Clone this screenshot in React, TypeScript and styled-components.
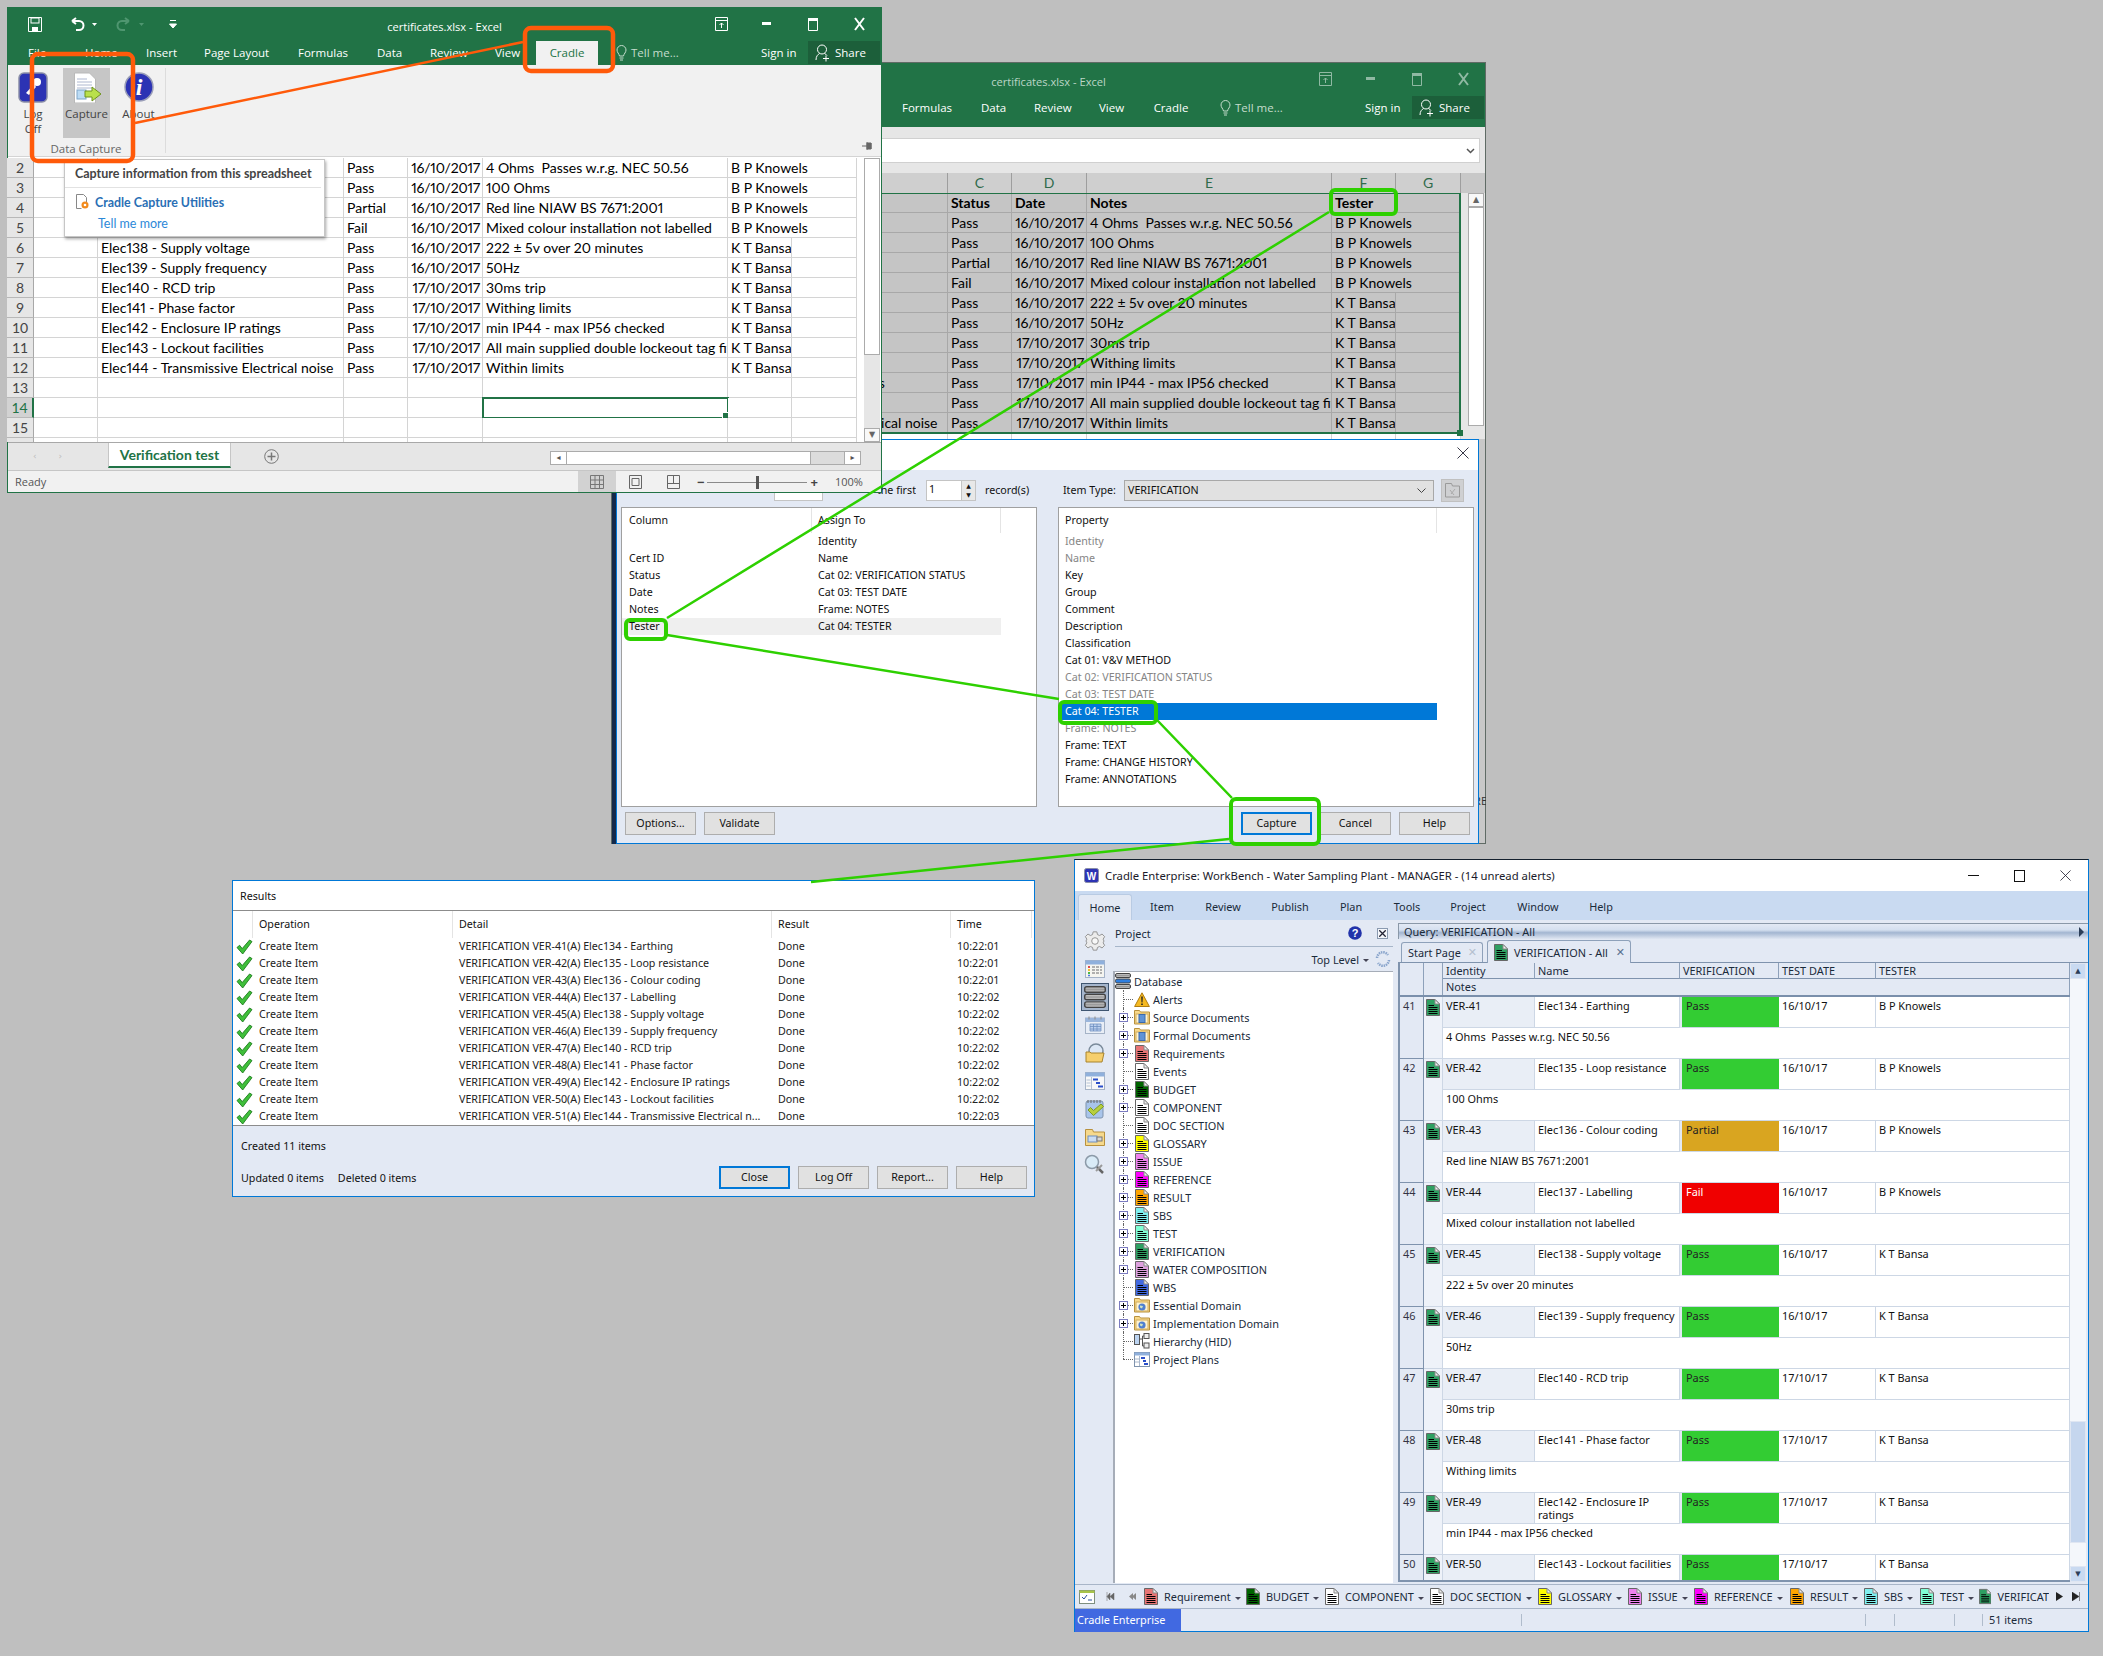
import React from "react";
import styled, { createGlobalStyle } from "styled-components";

const CALIBRI = `Lato, "Liberation Sans", sans-serif`;
const SEGOE = `"Open Sans", "Liberation Sans", sans-serif`;
const TAHOMA = `"Noto Sans", "Liberation Sans", sans-serif`;

const GlobalStyle = createGlobalStyle`
  html, body { margin: 0; padding: 0; background: #bfbfbf; }
  * { box-sizing: border-box; }
`;

const Desktop = styled.div`
  position: relative;
  width: 2103px;
  height: 1656px;
  background: #bfbfbf;
  overflow: hidden;
`;

/* ---------- data ---------- */

const SHEET = [
  { n: 2, name: "Elec134 - Earthing", status: "Pass", date: "16/10/2017", notes: "4 Ohms  Passes w.r.g. NEC 50.56", tester: "B P Knowels" },
  { n: 3, name: "Elec135 - Loop resistance", status: "Pass", date: "16/10/2017", notes: "100 Ohms", tester: "B P Knowels" },
  { n: 4, name: "Elec136 - Colour coding", status: "Partial", date: "16/10/2017", notes: "Red line NIAW BS 7671:2001", tester: "B P Knowels" },
  { n: 5, name: "Elec137 - Labelling", status: "Fail", date: "16/10/2017", notes: "Mixed colour installation not labelled", tester: "B P Knowels" },
  { n: 6, name: "Elec138 - Supply voltage", status: "Pass", date: "16/10/2017", notes: "222 ± 5v over 20 minutes", tester: "K T Bansa" },
  { n: 7, name: "Elec139 - Supply frequency", status: "Pass", date: "16/10/2017", notes: "50Hz", tester: "K T Bansa" },
  { n: 8, name: "Elec140 - RCD trip", status: "Pass", date: "17/10/2017", notes: "30ms trip", tester: "K T Bansa" },
  { n: 9, name: "Elec141 - Phase factor", status: "Pass", date: "17/10/2017", notes: "Withing limits", tester: "K T Bansa" },
  { n: 10, name: "Elec142 - Enclosure IP ratings", status: "Pass", date: "17/10/2017", notes: "min IP44 - max IP56 checked", tester: "K T Bansa" },
  { n: 11, name: "Elec143 - Lockout facilities", status: "Pass", date: "17/10/2017", notes: "All main supplied double lockeout tag fitted", tester: "K T Bansa" },
  { n: 12, name: "Elec144 - Transmissive Electrical noise", status: "Pass", date: "17/10/2017", notes: "Within limits", tester: "K T Bansa" },
];

const RESULT_DETAILS = [
  ["VERIFICATION VER-41(A) Elec134 - Earthing", "10:22:01"],
  ["VERIFICATION VER-42(A) Elec135 - Loop resistance", "10:22:01"],
  ["VERIFICATION VER-43(A) Elec136 - Colour coding", "10:22:01"],
  ["VERIFICATION VER-44(A) Elec137 - Labelling", "10:22:02"],
  ["VERIFICATION VER-45(A) Elec138 - Supply voltage", "10:22:02"],
  ["VERIFICATION VER-46(A) Elec139 - Supply frequency", "10:22:02"],
  ["VERIFICATION VER-47(A) Elec140 - RCD trip", "10:22:02"],
  ["VERIFICATION VER-48(A) Elec141 - Phase factor", "10:22:02"],
  ["VERIFICATION VER-49(A) Elec142 - Enclosure IP ratings", "10:22:02"],
  ["VERIFICATION VER-50(A) Elec143 - Lockout facilities", "10:22:02"],
  ["VERIFICATION VER-51(A) Elec144 - Transmissive Electrical n...", "10:22:03"],
];

const TYPE_COLOURS: Record<string, string> = {
  Requirements: "#e87474",
  Events: "#ffffff",
  BUDGET: "#006400",
  COMPONENT: "#ffffff",
  "DOC SECTION": "#ffffff",
  GLOSSARY: "#ffff00",
  ISSUE: "#ee82ee",
  REFERENCE: "#ff00ff",
  RESULT: "#ffa500",
  SBS: "#7fefef",
  TEST: "#7fffd4",
  VERIFICATION: "#2e9f62",
  "WATER COMPOSITION": "#dda0dd",
  WBS: "#4169e1",
};

/* ---------- drawings ---------- */

const DocIcon = ({ fill }: { fill: string }) => (
  <svg width="14" height="17" viewBox="0 0 14 17">
    <path d="M.5.5H9L13.500 5v11.500H.5z" fill={fill} stroke="#666" />
    <path d="M9 .5V5h4.500z" fill="#eee" stroke="#888" />
    <path d="M2.500 6.500H8M2.500 8.500h9M2.500 10.500h9M2.500 12.500h9M2.500 14.500h9" stroke="#000" />
  </svg>
);

const FolderIcon = ({ globe }: { globe?: boolean }) => (
  <svg width="16" height="15" viewBox="0 0 16 15">
    <path d="M.5 2V.5h5l1 1.500h9v12H.5z" fill="#f8d98a" stroke="#b8913e" />
    <rect x="2" y="4" width="12" height="9" fill="#fff3cf" stroke="#d2ad5d" />
    {globe ? (
      <>
        <circle cx="8" cy="9" r="3.600" fill="#4f7fd0" />
        <path d="M6 7.500l3 .5-1 2.500-2-1z" fill="#cfe3c0" />
      </>
    ) : (
      <rect x="5" y="4.500" width="6" height="8" fill="#5f93d6" stroke="#3a6ab0" />
    )}
  </svg>
);

const DbIcon = ({ size }: { size: number }) => (
  <svg width={size} height={size} viewBox="0 0 16 16">
    <defs>
      <linearGradient id="dbg" x1="0" y1="0" x2="0" y2="1">
        <stop offset="0" stopColor="#dcdcdc" />
        <stop offset=".5" stopColor="#9a9a9a" />
        <stop offset="1" stopColor="#cfcfcf" />
      </linearGradient>
    </defs>
    <rect x=".5" y=".5" width="15" height="4" rx="1.500" fill="url(#dbg)" stroke="#444" />
    <rect x=".5" y="6" width="15" height="4" rx="1.500" fill={size > 16 ? "url(#dbg)" : "#2f7fe0"} stroke="#444" />
    <rect x=".5" y="11.500" width="15" height="4" rx="1.500" fill="url(#dbg)" stroke="#444" />
  </svg>
);

const AlertIcon = () => (
  <svg width="16" height="15" viewBox="0 0 16 15">
    <path d="M8 .8l7.400 13.700H.6z" fill="#f5b921" stroke="#b07d10" />
    <path d="M7.200 4.500h1.600l-.3 6h-1zM7.200 11.500h1.600v1.600H7.200z" fill="#222" />
  </svg>
);

const HierarchyIcon = () => (
  <svg width="16" height="16" viewBox="0 0 16 16">
    <rect x=".5" y="1.500" width="5" height="10" fill="#bcd4f2" stroke="#555" />
    <rect x="10" y=".5" width="5" height="5" fill="#eee" stroke="#555" />
    <rect x="10" y="10" width="5" height="5" fill="#eee" stroke="#555" />
    <path d="M5.500 6h3M8.500 3v10M8.500 3H10M8.500 13H10" fill="none" stroke="#555" />
  </svg>
);

const PlanIcon = () => (
  <svg width="16" height="15" viewBox="0 0 16 15">
    <rect x=".5" y=".5" width="15" height="14" fill="#fff" stroke="#7f93ad" />
    <rect x=".5" y=".5" width="15" height="3" fill="#8fb0dc" />
    <path d="M1 7h4M1 10h4M5.500 4v10" stroke="#aab8cc" />
    <path d="M7 6h4M9 9h3M10 12h4" stroke="#2b4fc9" strokeWidth="2" />
  </svg>
);

const Tick = () => (
  <svg width="17" height="16" viewBox="0 0 17 16">
    <path d="M1 8.500l2.600-2.200 2.600 3.300L13.600 1l2.400 1.600L6.700 15z" fill="#3fbf3a" stroke="#1f7d1f" strokeWidth=".9" />
  </svg>
);

const ExpandBox = () => (
  <svg width="9" height="9" viewBox="0 0 9 9">
    <rect x=".5" y=".5" width="8" height="8" fill="#fff" stroke="#7b7bc0" />
    <path d="M2 4.500h5M4.500 2v5" stroke="#000" />
  </svg>
);

const railIcons: React.ReactNode[] = [
  <svg key="g" width="22" height="22" viewBox="0 0 24 24">
    <path
      d="M10 2h4l.7 3 2.300 1 2.700-1.600 2.800 2.800L20.900 10l.9 2-.9 2 1.600 2.800-2.800 2.800L17 18l-2.300 1-.7 3h-4l-.7-3L7 18l-2.700 1.600-2.800-2.800L3.100 14l-.9-2 .9-2-1.600-2.800 2.800-2.800L7 6l2.300-1z"
      fill="#ececec"
      stroke="#8d8d8d"
    />
    <circle cx="12" cy="12" r="3.600" fill="#f8f8f8" stroke="#8d8d8d" />
  </svg>,
  <svg key="l" width="20" height="18" viewBox="0 0 20 18">
    <rect x=".5" y=".5" width="19" height="17" fill="#f5f5f0" stroke="#a5b3c7" />
    <rect x=".5" y=".5" width="19" height="4" fill="#8fb0dc" />
    <path d="M3 7h2" stroke="#e04a4a" strokeWidth="2" />
    <path d="M3 10h2" stroke="#f0c030" strokeWidth="2" />
    <path d="M3 13h2" stroke="#4ab84a" strokeWidth="2" />
    <path d="M3 15.500h2" stroke="#4a7ae0" strokeWidth="1.500" />
    <path d="M7 7h10M7 10h10M7 13h10" stroke="#999" strokeWidth="1.500" strokeDasharray="3 1" />
  </svg>,
  <DbIcon key="d" size={22} />,
  <svg key="c" width="20" height="18" viewBox="0 0 20 18">
    <rect x=".5" y="2" width="19" height="15.500" fill="#e9eef6" stroke="#a5b3c7" />
    <rect x=".5" y="2" width="19" height="4" fill="#9bb6dc" />
    <path d="M4 .5v3M10 .5v3M16 .5v3" stroke="#8a8a8a" />
    <path d="M5 8h11v7H5z M5 10.500h11M5 13h11M8.500 8v7M12 8v7" fill="#bcd0ee" stroke="#6f8fc0" strokeWidth=".8" />
  </svg>,
  <svg key="o" width="20" height="20" viewBox="0 0 20 20">
    <circle cx="11" cy="8" r="7" fill="#dce7f5" stroke="#7a8a9a" strokeWidth="1.500" />
    <path d="M1 9h4l1 1h13l-2 9H1z" fill="#f6cf6d" stroke="#a8842e" />
  </svg>,
  <svg key="p" width="20" height="18" viewBox="0 0 20 18">
    <rect x=".5" y=".5" width="19" height="17" fill="#f8f8f8" stroke="#a5b3c7" />
    <rect x=".5" y=".5" width="19" height="4" fill="#8fb0dc" />
    <path d="M6.500 5v12" stroke="#b5c3d6" />
    <path d="M1.500 8h4M1.500 11h4M1.500 14h4" stroke="#b5c3d6" />
    <path d="M8 7.500h5M11 11h4M13 14.500h5" stroke="#2b4fc9" strokeWidth="2" />
  </svg>,
  <svg key="k" width="20" height="20" viewBox="0 0 20 20">
    <rect x="1" y="2" width="17" height="17" rx="2" fill="#a8c4ea" stroke="#7f93ad" />
    <path d="M3 1v3M6 1v3M9 1v3M12 1v3M15 1v3" stroke="#666" />
    <path d="M3 11l2.500-2.500 3 3L16 5l2.500 2.500L8.500 16.500z" fill="#b7cf3e" stroke="#7f9a20" />
  </svg>,
  <svg key="f" width="20" height="17" viewBox="0 0 20 17">
    <path d="M.5 3V.5h7l1 2.500h11v13.500H.5z" fill="#f6d98c" stroke="#b8913e" />
    <rect x="3" y="7" width="9" height="6" fill="#c9dcf3" stroke="#6f8fc0" />
    <rect x="12" y="8" width="5" height="4" fill="#d8d8d8" stroke="#777" />
  </svg>,
  <svg key="s" width="22" height="22" viewBox="0 0 22 22">
    <circle cx="8" cy="8" r="6.500" fill="#d9ebf7" stroke="#8c9aa8" strokeWidth="1.500" />
    <path d="M13 13l6 6" stroke="#666" strokeWidth="2.500" />
    <path d="M12 17l6-6" stroke="#9a9a9a" strokeWidth="2" />
  </svg>,
];

/* ---------- excel windows ---------- */

const ExcelFrame = styled.section<{ $front?: boolean }>`
  position: absolute;
  left: ${(p) => (p.$front ? 7 : 611)}px;
  top: ${(p) => (p.$front ? 7 : 62)}px;
  width: 875px;
  height: ${(p) => (p.$front ? 486 : 782)}px;
  display: flex;
  flex-direction: column;
  background: ${(p) => (p.$front ? "#f1f1f1" : "#c8c8c8")};
  outline: 1px solid ${(p) => (p.$front ? "#217346" : "#5f6b65")};
  outline-offset: -1px;
  overflow: hidden;
`;

const ExcelHead = styled.div<{ $tall?: boolean }>`
  height: ${(p) => (p.$tall ? 65 : 58)}px;
  flex: none;
  background: #217346;
  color: #fff;
`;

const TitleRow = styled.div`
  height: 34px;
  display: grid;
  grid-template-columns: 1fr auto 1fr;
  align-items: center;
`;

const QuickAccess = styled.div`
  display: flex;
  align-items: center;
  padding-left: 21px;
`;

const QuickSlot = styled.span<{ $w: number }>`
  display: flex;
  width: ${(p) => p.$w}px;
  align-items: center;
`;

const WindowTitle = styled.div<{ $dim?: boolean }>`
  font: 11.1px ${SEGOE};
  color: ${(p) => (p.$dim ? "#bcd6c6" : "#fff")};
  padding-top: 4px;
`;

const CaptionButtons = styled.div<{ $dim?: boolean }>`
  display: flex;
  justify-content: flex-end;
  opacity: ${(p) => (p.$dim ? 0.5 : 1)};
`;

const CaptionButton = styled.span`
  display: flex;
  width: 46px;
  justify-content: center;
  align-items: center;
`;

const TabRow = styled.div`
  height: 24px;
  display: flex;
  padding-left: 21px;
  font: 11.5px/24px ${SEGOE};
`;

const RibbonTab = styled.span<{ $w: number; $on?: boolean; $center?: boolean }>`
  width: ${(p) => p.$w}px;
  flex: none;
  white-space: nowrap;
  ${(p) => p.$center && "text-align:center;"}
  ${(p) => p.$on && "background:#f1f1f1;color:#217346;"}
`;

const TellMe = styled.span`
  display: flex;
  align-items: center;
  gap: 4px;
  width: 163px;
  padding-left: 18px;
  color: #c5ddcd;
`;

const SignIn = styled.span`
  width: 47px;
  flex: none;
`;

const ShareTab = styled.span`
  display: flex;
  align-items: center;
  gap: 5px;
  width: 72px;
  height: 23px;
  padding-left: 7px;
  background: #1c5f3a;
`;

const Ribbon = styled.div`
  height: 92px;
  flex: none;
  display: flex;
  padding-top: 3px;
  background: #f1f1f1;
  border-bottom: 1px solid #d4d4d4;
`;

const RibbonGroup = styled.div`
  width: 159px;
  margin-bottom: 3px;
  padding-left: 8px;
  border-right: 1px solid #dcdcdc;
  display: grid;
  grid-template-columns: 48px 49px 53px;
  grid-template-rows: 70px 1fr;
`;

const RibbonCommand = styled.div<{ $w: number; $on?: boolean }>`
  width: ${(p) => p.$w}px;
  display: flex;
  flex-direction: column;
  align-items: center;
  padding-top: 4px;
  font: 11.5px/15px ${SEGOE};
  color: #444;
  text-align: center;
  background: ${(p) => (p.$on ? "#c6c6c6" : "transparent")};
`;

const RibbonCommandIcon = styled.span`
  display: block;
  height: 31px;
  margin-bottom: 3px;
`;

const RibbonGroupName = styled.div`
  grid-column: 1 / 4;
  padding-right: 8px;
  font: 11.5px/22px ${SEGOE};
  color: #666;
  text-align: center;
`;

const RibbonPin = styled.span`
  margin: auto 9px 5px auto;
  line-height: 0;
`;

const FormulaBar = styled.div`
  height: 46px;
  flex: none;
  padding: 11px 6px 10px 0;
  background: #e6e6e6;
`;

const FormulaInput = styled.div`
  height: 25px;
  display: flex;
  justify-content: flex-end;
  align-items: center;
  padding-right: 4px;
  background: #fff;
  border: 1px solid #d0d0d0;
`;

const SheetArea = styled.div<{ $front?: boolean }>`
  display: flex;
  flex: none;
  height: ${(p) => (p.$front ? 286 : 246)}px;
  padding-top: ${(p) => (p.$front ? 1 : 0)}px;
  background: ${(p) => (p.$front ? "#fff" : "#e6e6e6")};
  border-bottom: ${(p) => (p.$front ? "1px solid #a8a8a8" : "0")};
  overflow: hidden;
`;

const SheetGrid = styled.div`
  position: relative;
  flex: none;
  width: 850px;
`;

const SheetRow = styled.div`
  display: grid;
  grid-template-columns: 27px 64px 246px 64px 75px 245px 64px 65px;
  height: 20px;
`;

const RowHead = styled.div<{ $active?: boolean; $dim?: boolean }>`
  font: 14px/19px ${CALIBRI};
  text-align: center;
  color: ${(p) => (p.$active ? "#217346" : "#444")};
  background: ${(p) => (p.$active ? "#d2d2d2" : p.$dim ? "#c8c8c8" : "#e6e6e6")};
  border-right: ${(p) => (p.$active ? "2px solid #217346" : "1px solid #a8a8a8")};
  border-bottom: 1px solid #b8b8b8;
`;

const ColumnHead = styled(RowHead)`
  color: #2f6a4b;
  background: #cfcfcf;
  border-right: 1px solid #9e9e9e;
  border-bottom: 0;
`;

const Cell = styled.div<{
  $dim?: boolean;
  $wide?: boolean;
  $date?: boolean;
  $bold?: boolean;
  $active?: boolean;
}>`
  position: relative;
  padding: 0 ${(p) => (p.$date ? 2 : 3)}px 0 3px;
  font: ${(p) => (p.$bold ? 700 : 400)} 14px/19px ${CALIBRI};
  font-variant-numeric: proportional-nums;
  letter-spacing: ${(p) => (p.$date ? "-0.2px" : "0")};
  color: #000;
  white-space: pre;
  overflow: ${(p) => (p.$active ? "visible" : "hidden")};
  text-align: ${(p) => (p.$date ? "right" : "left")};
  background: ${(p) => (p.$dim ? "#c5c5c5" : "#fff")};
  border-right: 1px solid ${(p) => (p.$dim ? "#a8a8a8" : "#d4d4d4")};
  border-bottom: 1px solid ${(p) => (p.$dim ? "#a8a8a8" : "#d4d4d4")};
  ${(p) => p.$wide && "grid-column: span 2;"}
  ${(p) =>
    p.$active &&
    `outline:2px solid #217346;outline-offset:-1px;
     &::after{content:"";position:absolute;right:-3px;bottom:-3px;width:6px;height:6px;background:#217346;border:1px solid #fff;}`}
`;

const SelectionBox = styled.div`
  position: absolute;
  left: 26px;
  top: -1px;
  width: 824px;
  height: 242px;
  border: 2px solid #217346;
  pointer-events: none;
  &::after {
    content: "";
    position: absolute;
    right: -4px;
    bottom: -4px;
    width: 6px;
    height: 6px;
    background: #217346;
  }
`;

const ScrollColumn = styled.div`
  width: 16px;
  margin-left: 7px;
  flex: none;
  display: flex;
  flex-direction: column;
  background: #e6e6e6;
`;

const ScrollButton = styled.span`
  flex: none;
  height: 14px;
  display: flex;
  align-items: center;
  justify-content: center;
  background: #f8f8f8;
  border: 1px solid #ababab;
  font: 8px/1 "DejaVu Sans", sans-serif;
  color: #666;
`;

const ScrollThumb = styled.span<{ $h: number }>`
  flex: none;
  height: ${(p) => p.$h}px;
  background: #fff;
  border: 1px solid #ababab;
`;

const ScrollRest = styled.span`
  flex: 1;
`;

const SheetTabs = styled.div`
  height: 28px;
  flex: none;
  display: flex;
  align-items: flex-start;
  background: #e6e6e6;
  border-bottom: 1px solid #c6c6c6;
  font: 700 14px/1 ${CALIBRI};
`;

const TabArrows = styled.div`
  display: flex;
  width: 101px;
  height: 26px;
  padding-left: 26px;
  gap: 22px;
  align-items: center;
  color: #bcbcbc;
  font: 9px/1 "DejaVu Sans", sans-serif;
`;

const SheetTab = styled.div`
  width: 123px;
  height: 25px;
  text-align: center;
  line-height: 23px;
  color: #217346;
  background: #fff;
  border: 1px solid #c6c6c6;
  border-top: 0;
  border-bottom: 2px solid #217346;
`;

const AddSheet = styled.span`
  width: 319px;
  height: 26px;
  display: flex;
  align-items: center;
  padding-left: 33px;
`;

const HScroll = styled.div`
  display: flex;
  width: 311px;
  height: 14px;
  margin-top: 8px;
  background: #dcdcdc;
  border: 1px solid #ababab;
  font: 8px/12px "DejaVu Sans", sans-serif;
  color: #555;
`;

const HScrollEnd = styled.span`
  width: 15px;
  flex: none;
  text-align: center;
  background: #fff;
`;

const HScrollThumb = styled.span`
  width: 245px;
  background: #fff;
  border-left: 1px solid #ababab;
  border-right: 1px solid #ababab;
`;

const HScrollGap = styled.span`
  flex: 1;
  border-right: 1px solid #ababab;
`;

const StatusRow = styled.div`
  flex: 1;
  display: flex;
  align-items: stretch;
  background: #f1f1f1;
  font: 11px ${SEGOE};
  color: #555;
`;

const StatusReady = styled.span`
  width: 571px;
  padding: 3px 0 0 8px;
`;

const ViewButton = styled.span<{ $on?: boolean; $w: number }>`
  display: flex;
  width: ${(p) => p.$w}px;
  align-items: center;
  justify-content: center;
  background: ${(p) => (p.$on ? "#d2d2d2" : "transparent")};
`;

const ZoomSlider = styled.span`
  display: flex;
  align-items: center;
  margin-left: 5px;
  width: 129px;
  gap: 3px;
  font: 700 13px/1 ${SEGOE};
  color: #444;
`;

const ZoomTrack = styled.span`
  position: relative;
  flex: none;
  width: 100px;
  height: 1px;
  background: #8a8a8a;
  &::after {
    content: "";
    position: absolute;
    left: 49px;
    top: -6px;
    width: 3px;
    height: 13px;
    background: #555;
  }
`;

const ZoomValue = styled.span`
  padding: 3px 0 0 9px;
`;

const Popup = styled.div`
  position: absolute;
  left: 57px;
  top: 1px;
  width: 261px;
  height: 78px;
  padding: 6px 0 0;
  background: #fff;
  border: 1px solid #c6c6c6;
  box-shadow: 1px 2px 3px rgba(0, 0, 0, 0.35);
`;

const PopupTitle = styled.div`
  padding: 0 6px 4px 10px;
  height: 22px;
  margin: 0 3px 0 0;
  border-bottom: 1px solid #e2e2e2;
  font: 700 12.5px/15px ${CALIBRI};
  color: #444;
  white-space: nowrap;
`;

const PopupLink = styled.div`
  display: flex;
  align-items: center;
  gap: 5px;
  padding: 6px 0 0 11px;
  font: 700 12.4px/15px ${CALIBRI};
  color: #2a6fb5;
`;

const PopupMore = styled.div`
  padding: 6px 0 0 33px;
  font: 12.5px/15px ${CALIBRI};
  color: #2b88d8;
`;

const RightFragment = styled.span`
  position: absolute;
  right: -1px;
  top: 731px;
  font: 11px ${SEGOE};
  color: #333;
`;

const Flat = ({ children, w, h }: { children: React.ReactNode; w: number; h: number }) => (
  <svg width={w} height={h} viewBox={`0 0 ${w} ${h}`}>
    {children}
  </svg>
);

const ExcelCaption = ({ dim }: { dim?: boolean }) => (
  <CaptionButtons $dim={dim}>
    <CaptionButton>
      <Flat w={13} h={14}>
        <path d="M.5.5h12v13H.5zM.5 3.500h12M6.500 11V6M4.500 8l2-2 2 2" fill="none" stroke="#fff" />
      </Flat>
    </CaptionButton>
    <CaptionButton>
      <Flat w={10} h={4}>
        <rect width="9" height="3" fill="#fff" />
      </Flat>
    </CaptionButton>
    <CaptionButton>
      <Flat w={11} h={15}>
        <path d="M.5 2.500h9v11h-9z" fill="none" stroke="#fff" />
        <rect y="1" width="10" height="3" fill="#fff" />
      </Flat>
    </CaptionButton>
    <CaptionButton>
      <Flat w={11} h={14}>
        <path d="M1 1l9 12M10 1L1 13" stroke="#fff" strokeWidth="2" />
      </Flat>
    </CaptionButton>
  </CaptionButtons>
);

const BulbIcon = () => (
  <svg width="11" height="17" viewBox="0 0 11 17">
    <path d="M3.500 11C3 8.500 1 7.500 1 5a4.500 4.500 0 019 0c0 2.500-2 3.500-2.500 6z M3.500 13h4M4 15h3" fill="none" stroke="#c5ddcd" />
  </svg>
);

const ShareIcon = () => (
  <svg width="15" height="18" viewBox="0 0 15 18">
    <circle cx="7" cy="5.500" r="4.500" fill="none" stroke="#fff" />
    <path d="M1 16c0-4 2-5.500 3.500-6.500M9.500 9.500c1 .5 2 1 2.500 2M8 14.500h6M11 11.500v6" fill="none" stroke="#fff" />
  </svg>
);

const ExcelTabs = ({ front }: { front?: boolean }) => (
  <TabRow>
    <RibbonTab $w={57}>File</RibbonTab>
    <RibbonTab $w={61}>Home</RibbonTab>
    <RibbonTab $w={58}>Insert</RibbonTab>
    <RibbonTab $w={94}>Page Layout</RibbonTab>
    <RibbonTab $w={79}>Formulas</RibbonTab>
    <RibbonTab $w={53}>Data</RibbonTab>
    <RibbonTab $w={65}>Review</RibbonTab>
    <RibbonTab $w={41}>View</RibbonTab>
    <RibbonTab $w={62} $on={front} $center>
      Cradle
    </RibbonTab>
    <TellMe>
      <BulbIcon />
      Tell me...
    </TellMe>
    <SignIn>Sign in</SignIn>
    <ShareTab>
      <ShareIcon />
      Share
    </ShareTab>
  </TabRow>
);

const SheetRows = ({ dim }: { dim?: boolean }) => (
  <>
    {SHEET.map((r) => {
      const knowles = r.tester.startsWith("B");
      return (
        <SheetRow key={r.n}>
          <RowHead $dim={dim}>{r.n}</RowHead>
          <Cell $dim={dim} />
          <Cell $dim={dim}>{r.name}</Cell>
          <Cell $dim={dim}>{r.status}</Cell>
          <Cell $dim={dim} $date>
            {r.date}
          </Cell>
          <Cell $dim={dim}>{r.notes}</Cell>
          <Cell $dim={dim} $wide={knowles}>
            {r.tester}
          </Cell>
          {!knowles && <Cell $dim={dim} />}
        </SheetRow>
      );
    })}
  </>
);

const BlankRow = ({ n, activeCell }: { n: number; activeCell?: boolean }) => (
  <SheetRow>
    <RowHead $active={activeCell}>{n}</RowHead>
    <Cell />
    <Cell />
    <Cell />
    <Cell />
    <Cell $active={activeCell} />
    <Cell />
    <Cell />
  </SheetRow>
);

const FrontExcel = () => (
  <ExcelFrame $front>
    <ExcelHead>
      <TitleRow>
        <QuickAccess>
          <QuickSlot $w={43}>
            <Flat w={14} h={15}>
              <path d="M.5.5h13v14H.5z" fill="none" stroke="#fff" />
              <rect x="3" y="1" width="8" height="5" fill="none" stroke="#fff" />
              <rect x="4" y="10" width="6" height="4.500" fill="#fff" />
            </Flat>
          </QuickSlot>
          <QuickSlot $w={44}>
            <Flat w={26} h={15}>
              <path d="M1 4l4-3M1 4l4 3M1 4h7a4.500 4.500 0 010 9H5" fill="none" stroke="#fff" strokeWidth="2" />
              <path d="M21 6h5l-2.500 3z" fill="#fff" />
            </Flat>
          </QuickSlot>
          <QuickSlot $w={54}>
            <Flat w={30} h={15}>
              <path d="M14 4l-4-3M14 4l-4 3M14 4H7a4.500 4.500 0 000 9h3" fill="none" stroke="#4f9670" strokeWidth="2" />
              <path d="M24 6h5l-2.500 3z" fill="#4f9670" />
            </Flat>
          </QuickSlot>
          <QuickSlot $w={10}>
            <Flat w={8} h={10}>
              <path d="M1 1.500h6M.5 5h7l-3.500 4z" fill="#fff" stroke="#fff" />
            </Flat>
          </QuickSlot>
        </QuickAccess>
        <WindowTitle>certificates.xlsx - Excel</WindowTitle>
        <ExcelCaption />
      </TitleRow>
      <ExcelTabs front />
    </ExcelHead>
    <Ribbon>
      <RibbonGroup>
        <RibbonCommand $w={36}>
          <RibbonCommandIcon>
            <svg width="30" height="31" viewBox="0 0 30 31">
              <rect x="1" y="1" width="28" height="29" rx="5" fill="#2c33b4" stroke="#8a8ea8" strokeWidth="1.500" />
              <circle cx="19" cy="10" r="4" fill="#fff" />
              <path d="M16 12L8 21l3 2 7-8z" fill="#fff" />
            </svg>
          </RibbonCommandIcon>
          Log
          <br />
          Off
        </RibbonCommand>
        <RibbonCommand $w={47} $on>
          <RibbonCommandIcon>
            <svg width="30" height="31" viewBox="0 0 30 31">
              <path d="M2.500 1h15l6 6v24h-21z" fill="#fff" stroke="#b9b9b9" />
              <path d="M5 7h10M5 10h15M5 13h15M5 16h15" stroke="#aeb8d0" />
              <rect x="5" y="18" width="9" height="9" fill="#bcdcf5" stroke="#7fa6c9" />
              <path d="M13 19h7v-4l9 7-9 7v-4h-7z" fill="#b9e04c" stroke="#6f9320" />
            </svg>
          </RibbonCommandIcon>
          Capture
        </RibbonCommand>
        <RibbonCommand $w={53}>
          <RibbonCommandIcon>
            <svg width="30" height="30" viewBox="0 0 30 30">
              <circle cx="15" cy="15" r="14" fill="#2c33b4" stroke="#9a9eb8" strokeWidth="1.500" />
              <text x="15" y="23" textAnchor="middle" fontFamily="Liberation Serif, serif" fontStyle="italic" fontWeight="700" fontSize="24" fill="#fff">
                i
              </text>
            </svg>
          </RibbonCommandIcon>
          About
        </RibbonCommand>
        <RibbonGroupName>Data Capture</RibbonGroupName>
      </RibbonGroup>
      <RibbonPin>
        <svg width="12" height="10" viewBox="0 0 12 10">
          <path d="M1 5h5M6 2h4v6H6zM6 1v8M10 2v6" fill="#666" stroke="#666" />
        </svg>
      </RibbonPin>
    </Ribbon>
    <SheetArea $front>
      <SheetGrid>
        <SheetRows />
        <BlankRow n={13} />
        <BlankRow n={14} activeCell />
        <BlankRow n={15} />
        <BlankRow n={16} />
        <Popup>
          <PopupTitle>Capture information from this spreadsheet</PopupTitle>
          <PopupLink>
            <svg width="14" height="16" viewBox="0 0 14 16">
              <path d="M.5.5h7l3 3v5M.5.5v14h5" fill="none" stroke="#888" />
              <circle cx="9" cy="11" r="3.500" fill="#f28a1c" />
              <circle cx="9" cy="11" r="1.300" fill="#fff" />
            </svg>
            Cradle Capture Utilities
          </PopupLink>
          <PopupMore>Tell me more</PopupMore>
        </Popup>
      </SheetGrid>
      <ScrollColumn>
        <ScrollThumb $h={197} />
        <ScrollRest />
        <ScrollButton>▼</ScrollButton>
      </ScrollColumn>
    </SheetArea>
    <SheetTabs>
      <TabArrows>
        <span>‹</span>
        <span>›</span>
      </TabArrows>
      <SheetTab>Verification test</SheetTab>
      <AddSheet>
        <svg width="15" height="15" viewBox="0 0 15 15">
          <circle cx="7.500" cy="7.500" r="6.800" fill="none" stroke="#777" />
          <path d="M3.500 7.500h8M7.500 3.500v8" stroke="#777" strokeWidth="1.500" />
        </svg>
      </AddSheet>
      <HScroll>
        <HScrollEnd>◂</HScrollEnd>
        <HScrollThumb />
        <HScrollGap />
        <HScrollEnd>▸</HScrollEnd>
      </HScroll>
    </SheetTabs>
    <StatusRow>
      <StatusReady>Ready</StatusReady>
      <ViewButton $on $w={38}>
        <Flat w={14} h={14}>
          <path d="M.5.5h13v13H.5zM.5 5h13M.5 9.500h13M5 .5v13M9.500.5v13" fill="none" stroke="#777" />
        </Flat>
      </ViewButton>
      <ViewButton $w={38}>
        <Flat w={13} h={14}>
          <path d="M.5.5h12v13H.5zM3 3.500h7v7H3z" fill="none" stroke="#666" />
        </Flat>
      </ViewButton>
      <ViewButton $w={38}>
        <Flat w={13} h={14}>
          <path d="M.5.5h12v13H.5zM.5 8.500h12M6.500.5v8" fill="none" stroke="#666" />
        </Flat>
      </ViewButton>
      <ZoomSlider>
        −
        <ZoomTrack />
        +
      </ZoomSlider>
      <ZoomValue>100%</ZoomValue>
    </StatusRow>
  </ExcelFrame>
);

const BackExcel = () => (
  <ExcelFrame>
    <ExcelHead $tall>
      <TitleRow>
        <span />
        <WindowTitle $dim>certificates.xlsx - Excel</WindowTitle>
        <ExcelCaption dim />
      </TitleRow>
      <ExcelTabs />
    </ExcelHead>
    <FormulaBar>
      <FormulaInput>
        <Flat w={9} h={6}>
          <path d="M1 1l3.500 3.500L8 1" fill="none" stroke="#555" strokeWidth="1.500" />
        </Flat>
      </FormulaInput>
    </FormulaBar>
    <SheetRow>
      <ColumnHead />
      {["A", "B", "C", "D", "E", "F", "G"].map((c) => (
        <ColumnHead key={c}>{c}</ColumnHead>
      ))}
    </SheetRow>
    <SheetArea>
      <SheetGrid>
        <SheetRow>
          <RowHead $dim>1</RowHead>
          <Cell $dim />
          <Cell $dim $bold>
            Cert ID
          </Cell>
          <Cell $dim $bold>
            Status
          </Cell>
          <Cell $dim $bold>
            Date
          </Cell>
          <Cell $dim $bold>
            Notes
          </Cell>
          <Cell $dim $bold $wide>
            Tester
          </Cell>
        </SheetRow>
        <SheetRows dim />
        <BlankRow n={13} />
        <SelectionBox />
      </SheetGrid>
      <ScrollColumn>
        <ScrollButton>▲</ScrollButton>
        <ScrollThumb $h={219} />
        <ScrollRest />
      </ScrollColumn>
    </SheetArea>
    <RightFragment>RE</RightFragment>
  </ExcelFrame>
);

/* ---------- dialogs ---------- */

const Dialog = styled.section<{ $x: number; $y: number; $w: number; $h: number }>`
  position: absolute;
  left: ${(p) => p.$x}px;
  top: ${(p) => p.$y}px;
  width: ${(p) => p.$w}px;
  height: ${(p) => p.$h}px;
  display: flex;
  flex-direction: column;
  background: #e3e9f4;
  border: 1px solid #0078d7;
  font: 10.7px/17px ${TAHOMA};
  color: #111;
`;

const CaptureDialog = styled(Dialog)`
  box-shadow: -4px 0 0 #14294a;
`;

const DialogHead = styled.div`
  flex: none;
  height: 30px;
  display: flex;
  align-items: center;
  justify-content: flex-end;
  padding: 0 9px 4px 7px;
  background: #fff;
`;

const DialogClose = styled.span`
  line-height: 0;
`;

const ControlRow = styled.div`
  flex: none;
  height: 37px;
  display: flex;
  align-items: center;
  padding: 4px 0 0 157px;
`;

const CoveredBox = styled.span`
  width: 49px;
  height: 21px;
  background: #fff;
  border: 1px solid #c4c4c4;
`;

const Caption = styled.span<{ $w: number; $right?: boolean }>`
  width: ${(p) => p.$w}px;
  flex: none;
  white-space: nowrap;
  overflow: hidden;
  text-align: ${(p) => (p.$right ? "right" : "left")};
`;

const SpinBox = styled.span`
  display: flex;
  width: 50px;
  height: 21px;
  margin: 0 9px 0 10px;
  padding-left: 2px;
  justify-content: space-between;
  background: #fff;
  border: 1px solid #c4c4c4;
`;

const SpinArrows = styled.span`
  display: flex;
  flex-direction: column;
  width: 14px;
  font: 6px/9px "DejaVu Sans", sans-serif;
  text-align: center;
  background: #e8e8e8;
  border-left: 1px solid #c4c4c4;
`;

const ItemSelect = styled.span`
  display: flex;
  width: 310px;
  height: 21px;
  padding: 0 7px 0 3px;
  align-items: center;
  justify-content: space-between;
  background: #e1e1e1;
  border: 1px solid #a8a8a8;
`;

const ItemPick = styled.span`
  display: flex;
  width: 23px;
  height: 23px;
  margin-left: 7px;
  align-items: center;
  justify-content: center;
  background: #cfd0d2;
  border: 1px solid #c0c0c0;
`;

const ListsRow = styled.div`
  flex: none;
  height: 300px;
  display: flex;
  gap: 21px;
  padding-left: 4px;
`;

const ListBox = styled.div`
  width: 416px;
  background: #fff;
  border: 1px solid #a0a0a0;
`;

const ListHeadCell = styled.div<{ $w: number; $pad: number }>`
  width: ${(p) => p.$w}px;
  height: 25px;
  padding-left: ${(p) => p.$pad}px;
  line-height: 24px;
  border-right: 1px solid #e4e4e4;
  flex: none;
`;

const ListHead = styled.div`
  display: flex;
`;

const MapRow = styled.div<{ $hl?: boolean }>`
  display: grid;
  grid-template-columns: 190px 189px;
  width: 379px;
  height: 17px;
  background: ${(p) => (p.$hl ? "#efefef" : "transparent")};
`;

const MapName = styled.span`
  padding-left: 7px;
`;

const MapTarget = styled.span`
  padding-left: 6px;
  white-space: nowrap;
`;

const PropRow = styled.div<{ $muted?: boolean; $on?: boolean }>`
  width: 378px;
  height: 17px;
  padding-left: 6px;
  color: ${(p) => (p.$on ? "#fff" : p.$muted ? "#858585" : "#111")};
  background: ${(p) => (p.$on ? "#0078d7" : "transparent")};
`;

const ButtonRow = styled.div`
  flex: none;
  display: flex;
  gap: 8px;
  height: 23px;
  margin-top: 5px;
  padding: 0 8px;
`;

const PushButton = styled.button<{ $primary?: boolean }>`
  width: 71px;
  height: 23px;
  padding: 0;
  font: 10.7px/17px ${TAHOMA};
  color: #111;
  background: #e1e1e1;
  border: ${(p) => (p.$primary ? "2px solid #0078d7" : "1px solid #adadad")};
`;

const ButtonGap = styled.span`
  flex: 1;
`;

const ResultsHead = styled.div`
  flex: none;
  height: 30px;
  padding-left: 7px;
  line-height: 30px;
  background: #fff;
  border-bottom: 1px solid #8c8c8c;
`;

const ResultsTable = styled.div`
  flex: none;
  height: 215px;
  background: #fff;
  border-bottom: 1px solid #8c8c8c;
`;

const ResultsRow = styled.div<{ $head?: boolean }>`
  display: grid;
  grid-template-columns: 20px 200px 319px 179px 81px;
  height: ${(p) => (p.$head ? 27 : 17)}px;
  line-height: ${(p) => (p.$head ? 27 : 17)}px;
  color: ${(p) => (p.$head ? "#111" : "#222")};
`;

const ResultsHeadCell = styled.span`
  padding-left: 6px;
  border-right: 1px solid #e4e4e4;
`;

const ResultsCell = styled.span`
  padding-left: 6px;
  white-space: nowrap;
`;

const TickCell = styled.span`
  display: flex;
  justify-content: flex-end;
  align-items: center;
`;

const ResultsFoot = styled.div`
  flex: 1;
  padding: 12px 7px 0 8px;
`;

const FootLine = styled.div`
  height: 17px;
`;

const FootBar = styled.div`
  display: flex;
  align-items: flex-start;
  gap: 8px;
  margin-top: 11px;
`;

const FootStats = styled.span`
  display: flex;
  gap: 14px;
  flex: 1;
  padding-top: 4px;
`;

const CloseGlyph = ({ s, weight = 0.9 }: { s: number; weight?: number }) => (
  <svg width={s} height={s} viewBox="0 0 12 12">
    <path d="M.5.5l11 11M11.500.5l-11 11" stroke="#223" strokeWidth={weight} />
  </svg>
);

const CaptureWindow = () => (
  <CaptureDialog $x={616} $y={439} $w={863} $h={405}>
    <DialogHead>
      <DialogClose>
        <CloseGlyph s={12} />
      </DialogClose>
    </DialogHead>
    <ControlRow>
      <CoveredBox />
      <Caption $w={93} $right>
        the first
      </Caption>
      <SpinBox>
        1
        <SpinArrows>
          <span>▲</span>
          <span>▼</span>
        </SpinArrows>
      </SpinBox>
      <Caption $w={78}>record(s)</Caption>
      <Caption $w={61}>Item Type:</Caption>
      <ItemSelect>
        VERIFICATION
        <Flat w={9} h={6}>
          <path d="M.5.5l4 4 4-4" fill="none" stroke="#444" />
        </Flat>
      </ItemSelect>
      <ItemPick>
        <Flat w={15} h={15}>
          <path d="M.5 3V.5h6l1 2.500h7v11H.5z" fill="none" stroke="#9a9a9a" />
          <path d="M5 7l4 5M10 6l-4 5" stroke="#aaa" />
        </Flat>
      </ItemPick>
    </ControlRow>
    <ListsRow>
      <ListBox>
        <ListHead>
          <ListHeadCell $w={190} $pad={7}>
            Column
          </ListHeadCell>
          <ListHeadCell $w={189} $pad={6}>
            Assign To
          </ListHeadCell>
        </ListHead>
        {[
          ["", "Identity"],
          ["Cert ID", "Name"],
          ["Status", "Cat 02: VERIFICATION STATUS"],
          ["Date", "Cat 03: TEST DATE"],
          ["Notes", "Frame: NOTES"],
          ["Tester", "Cat 04: TESTER"],
        ].map(([a, b]) => (
          <MapRow key={b} $hl={a === "Tester"}>
            <MapName>{a}</MapName>
            <MapTarget>{b}</MapTarget>
          </MapRow>
        ))}
      </ListBox>
      <ListBox>
        <ListHead>
          <ListHeadCell $w={378} $pad={6}>
            Property
          </ListHeadCell>
        </ListHead>
        {[
          ["Identity", 1],
          ["Name", 1],
          ["Key", 0],
          ["Group", 0],
          ["Comment", 0],
          ["Description", 0],
          ["Classification", 0],
          ["Cat 01: V&V METHOD", 0],
          ["Cat 02: VERIFICATION STATUS", 1],
          ["Cat 03: TEST DATE", 1],
          ["Cat 04: TESTER", 2],
          ["Frame: NOTES", 1],
          ["Frame: TEXT", 0],
          ["Frame: CHANGE HISTORY", 0],
          ["Frame: ANNOTATIONS", 0],
        ].map(([label, state]) => (
          <PropRow key={label as string} $muted={state === 1} $on={state === 2}>
            {label}
          </PropRow>
        ))}
      </ListBox>
    </ListsRow>
    <ButtonRow>
      <PushButton>Options...</PushButton>
      <PushButton>Validate</PushButton>
      <ButtonGap />
      <PushButton $primary>Capture</PushButton>
      <PushButton>Cancel</PushButton>
      <PushButton>Help</PushButton>
    </ButtonRow>
  </CaptureDialog>
);

const ResultsWindow = () => (
  <Dialog $x={232} $y={880} $w={803} $h={317}>
    <ResultsHead>Results</ResultsHead>
    <ResultsTable>
      <ResultsRow $head>
        <ResultsHeadCell />
        <ResultsHeadCell>Operation</ResultsHeadCell>
        <ResultsHeadCell>Detail</ResultsHeadCell>
        <ResultsHeadCell>Result</ResultsHeadCell>
        <ResultsHeadCell>Time</ResultsHeadCell>
      </ResultsRow>
      {RESULT_DETAILS.map(([detail, time]) => (
        <ResultsRow key={detail}>
          <TickCell>
            <Tick />
          </TickCell>
          <ResultsCell>Create Item</ResultsCell>
          <ResultsCell>{detail}</ResultsCell>
          <ResultsCell>Done</ResultsCell>
          <ResultsCell>{time}</ResultsCell>
        </ResultsRow>
      ))}
    </ResultsTable>
    <ResultsFoot>
      <FootLine>Created 11 items</FootLine>
      <FootBar>
        <FootStats>
          <span>Updated 0 items</span>
          <span>Deleted 0 items</span>
        </FootStats>
        <PushButton $primary>Close</PushButton>
        <PushButton>Log Off</PushButton>
        <PushButton>Report...</PushButton>
        <PushButton>Help</PushButton>
      </FootBar>
    </ResultsFoot>
  </Dialog>
);

/* ---------- cradle workbench ---------- */

const Cradle = styled.section`
  position: absolute;
  left: 1074px;
  top: 859px;
  width: 1015px;
  height: 773px;
  display: flex;
  flex-direction: column;
  background: #e3e9f4;
  border: 1px solid #0078d7;
  border-top-color: #14202e;
  font: 10.9px/15px ${TAHOMA};
  color: #1a2a3a;
`;

const CradleTitle = styled.div`
  flex: none;
  height: 31px;
  display: flex;
  align-items: center;
  padding-left: 9px;
  background: #fff;
  color: #1a1a2a;
  font-size: 11.3px;
`;

const TitleText = styled.span`
  flex: 1;
  margin-left: 6px;
`;

const CradleControl = styled.span`
  display: flex;
  width: 46px;
  justify-content: center;
`;

const MenuBar = styled.div`
  flex: none;
  height: 29px;
  display: flex;
  padding: 3px 0 0 3px;
  background: #c9daf1;
`;

const MenuItem = styled.span<{ $w: number; $on?: boolean }>`
  width: ${(p) => p.$w}px;
  text-align: center;
  line-height: 25px;
  ${(p) =>
    p.$on &&
    `background:#e3e9f4;border:1px solid #b9cbe3;border-bottom:0;border-radius:3px 3px 0 0;`}
`;

const Workspace = styled.div`
  flex: none;
  height: 664px;
  display: grid;
  grid-template-columns: 38px 285px 1fr;
  grid-template-rows: 664px;
`;

const Rail = styled.div`
  display: flex;
  flex-direction: column;
  align-items: center;
  padding: 7px 0 0 1px;
`;

const RailButton = styled.span<{ $on?: boolean }>`
  display: flex;
  flex: none;
  width: 28px;
  height: 28px;
  align-items: center;
  justify-content: center;
  ${(p) => p.$on && "background:#a5b6cd;border:1px solid #3e5570;"}
`;

const ProjectPanel = styled.div`
  display: flex;
  flex-direction: column;
  min-height: 0;
  padding-right: 5px;
`;

const ProjectHead = styled.div`
  flex: none;
  height: 27px;
  display: flex;
  align-items: center;
  gap: 8px;
  margin: 0 0 0 2px;
  padding: 0 5px 0 0;
  border-bottom: 1px solid #a7b6c9;
`;

const ProjectName = styled.span`
  flex: 1;
`;

const ProjectClose = styled.span`
  display: flex;
  width: 11px;
  height: 11px;
  margin: 0 0 0 7px;
  border: 1px solid #8a9ab0;
  background: #f4f6fa;
  align-items: center;
  justify-content: center;
`;

const LevelRow = styled.div`
  flex: none;
  height: 24px;
  display: flex;
  align-items: center;
  justify-content: flex-end;
  gap: 6px;
  padding-right: 2px;
`;

const Caret = styled.span`
  display: inline-block;
  width: 0;
  height: 0;
  margin-left: 4px;
  vertical-align: middle;
  border-left: 3px solid transparent;
  border-right: 3px solid transparent;
  border-top: 3px solid #445;
`;

const TreeBox = styled.div`
  flex: 1;
  background: #fff;
  border-top: 1px solid #a6adb8;
  border-left: 2px solid #a6adb8;
  margin-bottom: 1px;
`;

const TreeRoot = styled.div`
  display: flex;
  align-items: center;
  gap: 3px;
  height: 18px;
`;

const TreeRow = styled.div`
  display: flex;
  align-items: center;
  height: 18px;
  padding-left: 8px;
`;

const Twig = styled.span<{ $last?: boolean }>`
  position: relative;
  display: flex;
  flex: none;
  width: 10px;
  height: 18px;
  align-items: center;
  &::before {
    content: "";
    position: absolute;
    left: 0;
    top: 0;
    height: ${(p) => (p.$last ? 9 : 18)}px;
    border-left: 1px dotted #666;
  }
  &::after {
    content: "";
    position: absolute;
    left: 0;
    right: 0;
    top: 9px;
    border-top: 1px dotted #666;
  }
  svg {
    position: absolute;
    left: -4px;
    z-index: 1;
  }
`;

const TreeIcon = styled.span`
  display: flex;
  width: 17px;
  flex: none;
  justify-content: center;
  margin-right: 3px;
`;

const QueryPanel = styled.div`
  display: flex;
  flex-direction: column;
  min-height: 0;
  padding-top: 3px;
`;

const QueryBar = styled.div`
  flex: none;
  height: 16px;
  display: flex;
  justify-content: space-between;
  align-items: center;
  padding: 0 4px 0 5px;
  line-height: 14px;
  background: linear-gradient(#e3e9f4 0, #d4dfef 40%, #a3b6d1 58%, #dfe6f2 100%);
  border-top: 1px solid #8a98a8;
  border-left: 1px solid #8a98a8;
`;

const QueryArrow = styled.span`
  width: 0;
  height: 0;
  border-top: 5px solid transparent;
  border-bottom: 5px solid transparent;
  border-left: 5px solid #2c3e58;
`;

const DocTabs = styled.div`
  flex: none;
  height: 24px;
  display: flex;
  align-items: flex-end;
  gap: 4px;
  padding-left: 3px;
  border-bottom: 1px solid #7f93ad;
`;

const DocTab = styled.div<{ $on?: boolean }>`
  display: flex;
  align-items: center;
  gap: 6px;
  width: ${(p) => (p.$on ? 144 : 82)}px;
  height: ${(p) => (p.$on ? 23 : 20)}px;
  padding: 0 5px 0 6px;
  white-space: nowrap;
  background: #e3e9f4;
  border: 1px solid #8ea1ba;
  border-bottom: 0;
  border-radius: 3px 3px 0 0;
  ${(p) => p.$on && "margin-bottom:-1px;"}
`;

const TabX = styled.span<{ $on?: boolean }>`
  margin-left: auto;
  font: 700 11px/1 "DejaVu Sans", sans-serif;
  color: ${(p) => (p.$on ? "#5a7290" : "#b4bfce")};
`;

const GridArea = styled.div`
  flex: 1;
  min-height: 0;
  display: flex;
  padding-bottom: 2px;
`;

const Table = styled.div`
  width: 672px;
  display: flex;
  flex-direction: column;
  border-left: 2px solid #7f93ad;
  border-bottom: 2px solid #7f93ad;
`;

const TableHead = styled.div`
  flex: none;
  display: grid;
  grid-template-columns: 24px 19px 92px 145px 99px 97px 194px;
  grid-template-rows: 16px 16px;
  border-bottom: 2px solid #7a8fab;
  line-height: 15px;
`;

const HeadBlank = styled.span`
  grid-row: 1 / 3;
  border-right: 1px solid #8ea1ba;
`;

const HeadCell = styled.span`
  padding-left: 3px;
  border-right: 1px solid #8ea1ba;
  border-bottom: 1px solid #7f93ad;
`;

const NotesHead = styled.span`
  grid-column: 3 / 8;
  padding-left: 3px;
  border-right: 1px solid #8ea1ba;
`;

const TableBody = styled.div`
  flex: 1;
  min-height: 0;
  overflow: hidden;
`;

const RecordBlock = styled.div`
  display: grid;
  grid-template-columns: 24px 19px 92px 145px 99px 97px 194px;
  grid-template-rows: 31px 31px;
  height: 62px;
  line-height: 13px;
  color: #111;
`;

const RecordNo = styled.span`
  grid-row: 1 / 3;
  padding: 2px 0 0 3px;
  color: #334;
  border-right: 1px solid #7f93ad;
  border-bottom: 1px solid #7f93ad;
`;

const RecordIcon = styled.span`
  grid-row: 1 / 3;
  padding: 2px 0 0 2px;
  background: #eef2f9;
  border-right: 1px solid #cdd7e5;
  border-bottom: 1px solid #cdd7e5;
`;

const RecordCell = styled.span<{ $tint?: boolean }>`
  padding: 2px 2px 0 3px;
  background: ${(p) => (p.$tint ? "#e9eef6" : "#fff")};
  border-right: 1px solid #cdd7e5;
  border-bottom: 1px solid #cdd7e5;
`;

const StatusCell = styled.span<{ $tone: string }>`
  padding: 2px 0 0 4px;
  margin-left: 2px;
  color: ${(p) => (p.$tone === "Fail" ? "#fff" : "#222")};
  background: ${(p) =>
    p.$tone === "Fail" ? "#f00000" : p.$tone === "Partial" ? "#d9a520" : "#33cc33"};
  border-bottom: 1px solid #cdd7e5;
`;

const NotesCell = styled.span`
  grid-column: 3 / 8;
  padding: 2px 0 0 3px;
  white-space: pre;
  background: #fff;
  border-right: 1px solid #cdd7e5;
  border-bottom: 1px solid #cdd7e5;
`;

const GridScroll = styled.div`
  width: 16px;
  margin-left: 0;
  display: flex;
  flex-direction: column;
  background: #f4f7fb;
`;

const GridScrollEnd = styled.span`
  flex: none;
  height: 16px;
  background: #c9daf1;
  border: 1px solid #dfe6f2;
  font: 7px/14px "DejaVu Sans", sans-serif;
  text-align: center;
  color: #2c3e58;
`;

const GridScrollGap = styled.span<{ $h?: number }>`
  ${(p) => (p.$h ? `height:${p.$h}px;flex:none;` : "flex:1;")}
`;

const GridScrollThumb = styled.span`
  flex: none;
  height: 122px;
  background: #c5d6ee;
  border: 1px solid #dfe6f2;
`;

const TypeBar = styled.div`
  flex: none;
  height: 25px;
  display: flex;
  align-items: center;
  border-top: 1px solid #a8b5c8;
  border-bottom: 1px solid #a8b5c8;
  overflow: hidden;
`;

const TypeNav = styled.span<{ $w: number }>`
  display: flex;
  flex: none;
  width: ${(p) => p.$w}px;
  justify-content: center;
  align-items: center;
`;

const TypeItem = styled.span<{ $w: number }>`
  display: flex;
  flex: none;
  width: ${(p) => p.$w}px;
  align-items: center;
  gap: 6px;
  white-space: nowrap;
  overflow: hidden;
`;

const StatusBar = styled.div`
  flex: none;
  height: 23px;
  display: grid;
  grid-template-columns: 106px 341px 344px 29px 60px 28px 1fr;
`;

const StatusBadge = styled.span`
  padding-left: 2px;
  line-height: 22px;
  color: #fff;
  background: #4169e1;
`;

const StatusCellBox = styled.span`
  margin: 5px 0 6px;
  border-right: 1px solid #b0bccc;
`;

const StatusCount = styled.span`
  padding-left: 6px;
  line-height: 22px;
`;

const DocCell = styled.span`
  line-height: 0;
`;

const RECORDS = SHEET.map((r, i) => ({
  row: 41 + i,
  id: `VER-${41 + i}`,
  name: r.name,
  status: r.status,
  date: r.date.replace("2017", "17"),
  tester: r.tester,
  notes: r.notes,
})).slice(0, 10);

const TREE: { label: string; icon: React.ReactNode; expand?: boolean; last?: boolean }[] = [
  { label: "Alerts", icon: <AlertIcon /> },
  { label: "Source Documents", icon: <FolderIcon />, expand: true },
  { label: "Formal Documents", icon: <FolderIcon />, expand: true },
  { label: "Requirements", icon: <DocIcon fill={TYPE_COLOURS.Requirements} />, expand: true },
  { label: "Events", icon: <DocIcon fill={TYPE_COLOURS.Events} /> },
  ...[
    ["BUDGET", true],
    ["COMPONENT", true],
    ["DOC SECTION", false],
    ["GLOSSARY", true],
    ["ISSUE", true],
    ["REFERENCE", true],
    ["RESULT", true],
    ["SBS", true],
    ["TEST", true],
    ["VERIFICATION", true],
    ["WATER COMPOSITION", true],
    ["WBS", false],
  ].map(([label, expand]) => ({
    label: label as string,
    icon: <DocIcon fill={TYPE_COLOURS[label as string]} />,
    expand: expand as boolean,
  })),
  { label: "Essential Domain", icon: <FolderIcon globe />, expand: true },
  { label: "Implementation Domain", icon: <FolderIcon globe />, expand: true },
  { label: "Hierarchy (HID)", icon: <HierarchyIcon /> },
  { label: "Project Plans", icon: <PlanIcon />, last: true },
];

const TYPE_ITEMS: [string, string, number, boolean][] = [
  ["Requirement", TYPE_COLOURS.Requirements, 102, true],
  ["BUDGET", TYPE_COLOURS.BUDGET, 79, true],
  ["COMPONENT", TYPE_COLOURS.COMPONENT, 105, true],
  ["DOC SECTION", TYPE_COLOURS["DOC SECTION"], 108, true],
  ["GLOSSARY", TYPE_COLOURS.GLOSSARY, 90, true],
  ["ISSUE", TYPE_COLOURS.ISSUE, 66, true],
  ["REFERENCE", TYPE_COLOURS.REFERENCE, 96, true],
  ["RESULT", TYPE_COLOURS.RESULT, 74, true],
  ["SBS", TYPE_COLOURS.SBS, 56, true],
  ["TEST", TYPE_COLOURS.TEST, 59, true],
  ["VERIFICAT", TYPE_COLOURS.VERIFICATION, 70, false],
];

const Workbench = () => (
  <Cradle>
    <CradleTitle>
      <svg width="15" height="15" viewBox="0 0 15 15">
        <rect x=".5" y=".5" width="14" height="14" rx="2" fill="#2c33b4" stroke="#8a8ea8" />
        <text x="7.500" y="11.500" textAnchor="middle" fontFamily="Liberation Sans, sans-serif" fontWeight="700" fontSize="10" fill="#fff">
          W
        </text>
      </svg>
      <TitleText>Cradle Enterprise: WorkBench - Water Sampling Plant - MANAGER - (14 unread alerts)</TitleText>
      <CradleControl>
        <Flat w={11} h={1}>
          <rect width="11" height="1" fill="#111" />
        </Flat>
      </CradleControl>
      <CradleControl>
        <Flat w={11} h={12}>
          <rect x=".5" y=".5" width="10" height="11" fill="none" stroke="#111" />
        </Flat>
      </CradleControl>
      <CradleControl>
        <CloseGlyph s={11} />
      </CradleControl>
    </CradleTitle>
    <MenuBar>
      <MenuItem $w={54} $on>
        Home
      </MenuItem>
      <MenuItem $w={60}>Item</MenuItem>
      <MenuItem $w={62}>Review</MenuItem>
      <MenuItem $w={72}>Publish</MenuItem>
      <MenuItem $w={50}>Plan</MenuItem>
      <MenuItem $w={62}>Tools</MenuItem>
      <MenuItem $w={60}>Project</MenuItem>
      <MenuItem $w={80}>Window</MenuItem>
      <MenuItem $w={46}>Help</MenuItem>
    </MenuBar>
    <Workspace>
      <Rail>
        {railIcons.map((icon, i) => (
          <RailButton key={i} $on={i === 2}>
            {icon}
          </RailButton>
        ))}
      </Rail>
      <ProjectPanel>
        <ProjectHead>
          <ProjectName>Project</ProjectName>
          <svg width="14" height="14" viewBox="0 0 14 14">
            <circle cx="7" cy="7" r="6.800" fill="#2233aa" />
            <text x="7" y="11" textAnchor="middle" fontFamily="Liberation Sans, sans-serif" fontWeight="700" fontSize="11" fill="#fff">
              ?
            </text>
          </svg>
          <ProjectClose>
            <CloseGlyph s={7} weight={2.2} />
          </ProjectClose>
        </ProjectHead>
        <LevelRow>
          <span>
            Top Level
            <Caret />
          </span>
          <svg width="16" height="16" viewBox="0 0 16 16">
            <path d="M2 7a6 6 0 0111-3M14 9a6 6 0 01-11 3" fill="none" stroke="#8aa5cc" strokeWidth="2.500" strokeDasharray="1.500 .8" />
          </svg>
        </LevelRow>
        <TreeBox>
          <TreeRoot>
            <DbIcon size={16} />
            Database
          </TreeRoot>
          {TREE.map((t) => (
            <TreeRow key={t.label}>
              <Twig $last={t.last}>{t.expand && <ExpandBox />}</Twig>
              <TreeIcon>{t.icon}</TreeIcon>
              {t.label}
            </TreeRow>
          ))}
        </TreeBox>
      </ProjectPanel>
      <QueryPanel>
        <QueryBar>
          Query: VERIFICATION - All
          <QueryArrow />
        </QueryBar>
        <DocTabs>
          <DocTab>
            Start Page
            <TabX>✕</TabX>
          </DocTab>
          <DocTab $on>
            <DocIcon fill={TYPE_COLOURS.VERIFICATION} />
            VERIFICATION - All
            <TabX $on>✕</TabX>
          </DocTab>
        </DocTabs>
        <GridArea>
          <Table>
            <TableHead>
              <HeadBlank />
              <HeadBlank />
              <HeadCell>Identity</HeadCell>
              <HeadCell>Name</HeadCell>
              <HeadCell>VERIFICATION</HeadCell>
              <HeadCell>TEST DATE</HeadCell>
              <HeadCell>TESTER</HeadCell>
              <NotesHead>Notes</NotesHead>
            </TableHead>
            <TableBody>
              {RECORDS.map((r) => (
                <RecordBlock key={r.id}>
                  <RecordNo>{r.row}</RecordNo>
                  <RecordIcon>
                    <DocCell>
                      <DocIcon fill={TYPE_COLOURS.VERIFICATION} />
                    </DocCell>
                  </RecordIcon>
                  <RecordCell $tint>{r.id}</RecordCell>
                  <RecordCell>{r.name}</RecordCell>
                  <StatusCell $tone={r.status}>{r.status}</StatusCell>
                  <RecordCell>{r.date}</RecordCell>
                  <RecordCell>{r.tester}</RecordCell>
                  <NotesCell>{r.notes}</NotesCell>
                </RecordBlock>
              ))}
            </TableBody>
          </Table>
          <GridScroll>
            <GridScrollEnd>▲</GridScrollEnd>
            <GridScrollGap $h={442} />
            <GridScrollThumb />
            <GridScrollGap />
            <GridScrollEnd>▼</GridScrollEnd>
          </GridScroll>
        </GridArea>
      </QueryPanel>
    </Workspace>
    <TypeBar>
      <TypeNav $w={24}>
        <Flat w={16} h={14}>
          <rect x=".5" y=".5" width="15" height="13" fill="#fff" stroke="#7f8f7f" />
          <rect x=".5" y=".5" width="15" height="2.500" fill="#a8c44a" />
          <path d="M3 7l2 2 3-4M9 10h4" fill="none" stroke="#2b4f9e" />
        </Flat>
      </TypeNav>
      <TypeNav $w={22}>
        <Flat w={9} h={9}>
          <path d="M1 0v9M8 1L4 4.500 8 8zM4 1L1 4.500 4 8z" fill="#666" stroke="#666" strokeWidth=".5" />
        </Flat>
      </TypeNav>
      <TypeNav $w={23}>
        <Flat w={9} h={9}>
          <path d="M8 1L4 4.500 8 8zM5 1L1 4.500 5 8z" fill="#888" />
        </Flat>
      </TypeNav>
      {TYPE_ITEMS.map(([label, colour, w, caret]) => (
        <TypeItem key={label} $w={w}>
          <DocIcon fill={colour} />
          <span>
            {label}
            {caret && <Caret />}
          </span>
        </TypeItem>
      ))}
      <TypeNav $w={20}>
        <Flat w={7} h={9}>
          <path d="M0 0l7 4.500L0 9z" fill="#222" />
        </Flat>
      </TypeNav>
      <TypeNav $w={14}>
        <Flat w={9} h={9}>
          <path d="M0 0l7 4.500L0 9zM7.500 0v9" fill="#222" stroke="#222" strokeWidth=".5" />
        </Flat>
      </TypeNav>
    </TypeBar>
    <StatusBar>
      <StatusBadge>Cradle Enterprise</StatusBadge>
      <StatusCellBox />
      <StatusCellBox />
      <StatusCellBox />
      <StatusCellBox />
      <StatusCellBox />
      <StatusCount>51 items</StatusCount>
    </StatusBar>
  </Cradle>
);

/* ---------- callouts drawn over everything ---------- */

const Callouts = styled.svg`
  position: absolute;
  left: 0;
  top: 0;
  pointer-events: none;
`;

const App = () => (
  <Desktop>
    <GlobalStyle />
    <BackExcel />
    <CaptureWindow />
    <FrontExcel />
    <ResultsWindow />
    <Workbench />
    <Callouts width="2103" height="1656" viewBox="0 0 2103 1656" fill="none">
      <g stroke="#ff5a0a">
        <path d="M135 123L523 42" strokeWidth="2.500" />
        <rect x="525" y="28" width="88" height="43" rx="6" strokeWidth="4.500" />
        <rect x="32" y="54" width="101" height="107" rx="6" strokeWidth="4.500" />
      </g>
      <g stroke="#2ed000">
        <path d="M1329 212L667 618M667 635L1059 699M1157 720L1232 798M1229 839L811 882" strokeWidth="2.500" />
        <rect x="1331" y="190" width="65" height="24" rx="4" strokeWidth="4" />
        <rect x="626" y="620" width="40" height="19" rx="4" strokeWidth="4" />
        <rect x="1060" y="702" width="96" height="21" rx="4" strokeWidth="4" />
        <rect x="1231" y="799" width="88" height="45" rx="5" strokeWidth="4" />
      </g>
    </Callouts>
  </Desktop>
);

export default App;
